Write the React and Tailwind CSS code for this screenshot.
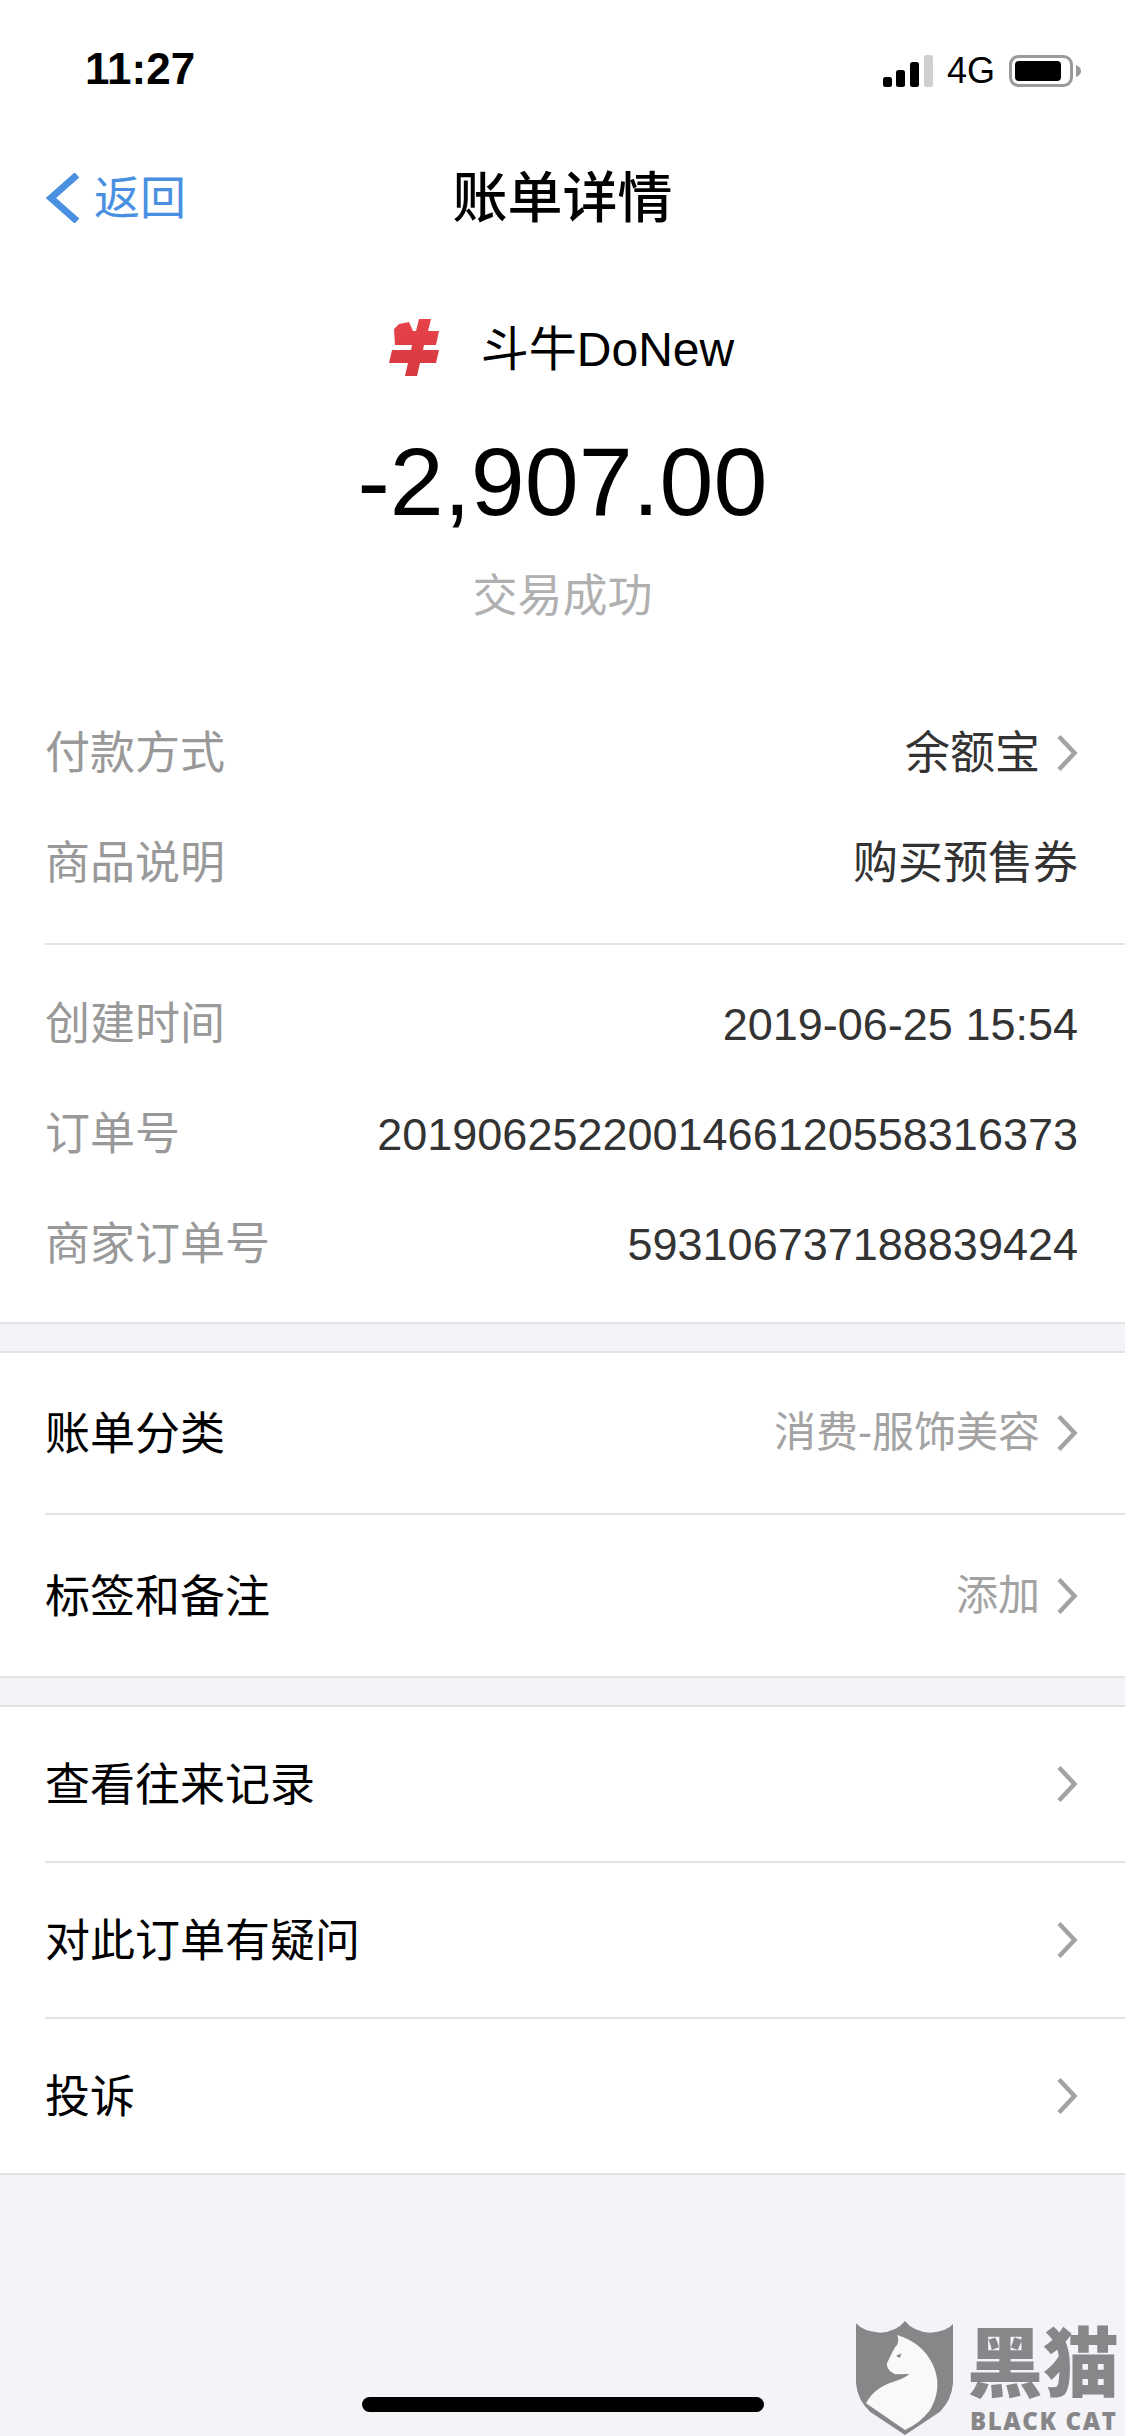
const font = { fontFamily: '"Liberation Sans", "Noto Sans CJK SC", sans-serif' };

const Chevron = () => (
  <svg width="22" height="38" viewBox="0 0 22 38" fill="none" className="shrink-0">
    <path d="M3 2.5 L18.5 19 L3 35.5" stroke="#a3a3a3" strokeWidth="4.5" />
  </svg>
);

const InfoRow = ({ label, value, chevron }) => (
  <div className="flex h-[110px] items-center justify-between pl-[45px] pr-[47px] text-[45px] leading-none">
    <span className="text-[#999999]">{label}</span>
    <span className="flex items-center gap-[16px] text-[#333333]">
      {value}
      {chevron && <Chevron />}
    </span>
  </div>
);

const ActionRow = ({ label, value, height, last }) => (
  <div className={`ml-[45px] flex items-center justify-between pr-[47px] ${height} ${last ? '' : 'border-b-[2px] border-[#e3e3e6]'}`}>
    <span className="mt-[3px] text-[45px] leading-none text-black">{label}</span>
    <span className="flex items-center gap-[16px] text-[42px] leading-none text-[#a3a3a3]">
      {value}
      <Chevron />
    </span>
  </div>
);

const Signal = () => (
  <svg width="50" height="32" viewBox="0 0 50 32">
    <rect x="0" y="22" width="9" height="10" rx="2.5" fill="#000" />
    <rect x="13" y="15" width="9" height="17" rx="2.5" fill="#000" />
    <rect x="27" y="7" width="9" height="25" rx="2.5" fill="#000" />
    <rect x="41" y="0" width="9" height="32" rx="2.5" fill="#cfcfcf" />
  </svg>
);

const Battery = () => (
  <svg width="72" height="32" viewBox="0 0 72 32">
    <rect x="1.5" y="1.5" width="61" height="29" rx="8" fill="none" stroke="#9a9a9a" strokeWidth="3" />
    <rect x="6" y="6" width="46" height="20" rx="4" fill="#000" />
    <path d="M67 10 Q72 12 72 16 Q72 20 67 22 Z" fill="#9a9a9a" />
  </svg>
);

const MerchantLogo = () => (
  <svg width="50" height="58" viewBox="0 0 50 58">
    <defs>
      <linearGradient id="logoRed" x1="0" y1="0" x2="0" y2="1">
        <stop offset="0" stopColor="#e8434a" />
        <stop offset="1" stopColor="#d5393f" />
      </linearGradient>
    </defs>
    <path
      d="M30 0 L42 0 L39 12 L50 12 L47 26 L35 26 L34 31 L50 31 L47 44 L31 44 L28 57 L16 57 L19 44 L0 44 L3 31 L22 31 L23 26 L6 26 L5 10 L10 5 L20 3 L24 12 L27 12 Z"
      fill="url(#logoRed)"
    />
  </svg>
);

const Shield = () => (
  <svg width="97" height="114" viewBox="228 243 291 342">
    <path
      d="M228 250 Q250 275 300 278 Q350 275 375 243 Q400 275 450 278 Q500 275 519 252 L519 430 Q515 480 480 515 L375 585 L270 515 Q232 480 228 430 Z"
      fill="#878688"
    />
    <path
      d="M352 285 L370 292 Q440 320 465 390 Q485 450 450 510 Q420 550 375 570 L258 490 Q280 445 340 425 Q375 415 388 402 L345 403 Q322 392 320 372 Q335 340 345 322 Q360 310 352 285 Z"
      fill="#f9f9fc"
    />
    <path d="M348 348 L364 340 L360 354 Z" fill="#878688" />
  </svg>
);

export default function App() {
  return (
    <div className="relative h-[2436px] w-[1125px] overflow-hidden bg-[#f3f3f8]" style={font}>
      <div className="border-b-[2px] border-[#e3e3e6] bg-white">
        {/* Status bar */}
        <div className="flex h-[136px] items-start justify-between pl-[85px] pr-[40px] pt-[47px]">
          <span className="text-[44px] font-bold leading-[44px] text-black">11:27</span>
          <div className="flex items-center gap-[14px] pr-[4px] pt-[6px]">
            <Signal />
            <span className="text-[36px] leading-none text-black">4G</span>
            <Battery />
          </div>
        </div>

        {/* Nav */}
        <div className="relative flex h-[122px] items-center justify-center">
          <div className="absolute left-[45px] top-[37px] flex items-center gap-[13px]">
            <svg width="36" height="50" viewBox="0 0 36 50" fill="none">
              <path d="M32 2 L6 25 L32 48" stroke="#4a90e2" strokeWidth="7" />
            </svg>
            <span className="text-[46px] leading-none text-[#4a90e2]">返回</span>
          </div>
          <span className="mt-[2px] text-[55px] font-medium leading-none text-black">账单详情</span>
        </div>

        {/* Summary */}
        <div className="flex h-[439px] flex-col items-center pt-[60px]">
          <div className="flex h-[60px] items-center gap-[42px] pr-[2px]">
            <MerchantLogo />
            <span className="mt-[3px] text-[48px] leading-none text-black">斗牛DoNew</span>
          </div>
          <div className="mt-[49px] text-[97px] leading-[110px] text-black">-2,907.00</div>
          <div className="mt-[30px] text-[45px] leading-[60px] text-[#b0b0b0]">交易成功</div>
        </div>

        {/* Payment info */}
        <div className="pb-[25px] pt-[1px]">
          <InfoRow label="付款方式" value="余额宝" chevron />
          <InfoRow label="商品说明" value="购买预售券" />
        </div>
        <div className="ml-[45px] border-t-[2px] border-[#e3e3e6]" />
        <div className="pb-[23px] pt-[24px]">
          <InfoRow label="创建时间" value="2019-06-25 15:54" />
          <InfoRow label="订单号" value="2019062522001466120558316373" />
          <InfoRow label="商家订单号" value="593106737188839424" />
        </div>
      </div>

      <div className="mt-[27px] border-y-[2px] border-[#e3e3e6] bg-white">
        <ActionRow label="账单分类" value="消费-服饰美容" height="h-[162px]" />
        <ActionRow label="标签和备注" value="添加" height="h-[161px]" last />
      </div>

      <div className="mt-[27px] border-y-[2px] border-[#e3e3e6] bg-white">
        <ActionRow label="查看往来记录" height="h-[156px]" />
        <ActionRow label="对此订单有疑问" height="h-[156px]" />
        <ActionRow label="投诉" height="h-[154px]" last />
      </div>

      {/* Home indicator */}
      <div className="absolute left-[362px] top-[2397px] h-[15px] w-[402px] rounded-full bg-black" />

      {/* Watermark */}
      <div className="absolute left-[856px] top-[2321px] flex gap-[14px]">
        <Shield />
        <div className="flex flex-col pt-[4px]">
          <span className="text-[76px] font-black leading-[80px] text-[#878688]">黑猫</span>
          <span
            className="ml-[3px] mt-[4px] whitespace-nowrap text-[24px] font-extrabold leading-[24px] tracking-[1.6px] text-[#878688]"
            style={{ fontFamily: '"Open Sans", sans-serif' }}
          >
            BLACK CAT
          </span>
        </div>
      </div>
    </div>
  );
}
